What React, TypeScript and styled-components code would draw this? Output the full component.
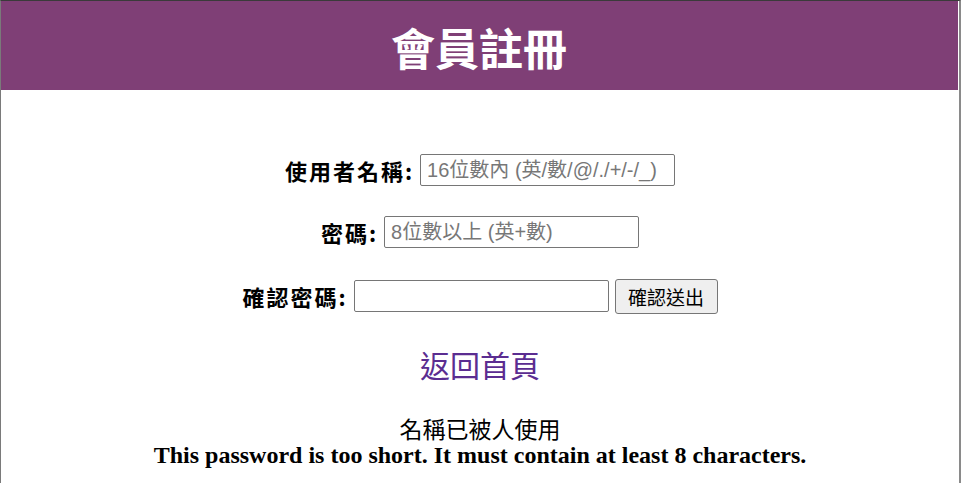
import React from "react";
import styled, { createGlobalStyle } from "styled-components";

const Global = createGlobalStyle`
  html, body { margin: 0; padding: 0; background: #fff; }
  body { font-family: "Liberation Sans", "Noto Sans CJK TC", sans-serif; }
`;

const Page = styled.div`
  box-sizing: border-box;
  width: 961px;
  height: 483px;
  border-top: 1px solid #3a3a3a;
  border-left: 1px solid #7a7a7a;
  border-right: 2px solid #8a8a8a;
  position: relative;
  overflow: hidden;
`;

const EdgeMark = styled.div`
  position: absolute;
  right: -2px;
  top: 333px;
  width: 2px;
  height: 62px;
  background: #2f5a58;
`;

const Header = styled.header`
  height: 89px;
  margin-left: -1px;
  margin-right: 1px;
  background: #7f3f76;
  display: flex;
  align-items: center;
  justify-content: center;
`;

const Title = styled.h1`
  margin: 0;
  color: #fff;
  font-family: "Noto Sans CJK TC", sans-serif;
  font-weight: 700;
  font-size: 44px;
  line-height: 1;
  padding-top: 2px;
`;

const Form = styled.form`
  display: flex;
  flex-direction: column;
  align-items: center;
  padding-top: 64px;
  gap: 30px;
`;

const Row = styled.div<{ $shift?: number }>`
  display: flex;
  align-items: center;
  gap: 6px;
  height: 32px;
  margin-top: ${(p) => p.$shift ?? 0}px;
`;

const Label = styled.label`
  font-family: "Noto Sans CJK TC", sans-serif;
  font-weight: 700;
  font-size: 22px;
  letter-spacing: 2px;
  color: #000;
`;

const Input = styled.input`
  box-sizing: border-box;
  width: 255px;
  height: 32px;
  border: 1px solid #767676;
  border-radius: 2px;
  padding: 0 6px;
  font-family: "Liberation Sans", "Noto Sans CJK TC", sans-serif;
  font-size: 20px;
  &::placeholder { color: #777; }
`;

const Button = styled.button`
  box-sizing: border-box;
  width: 103px;
  height: 35px;
  border: 1px solid #767676;
  border-radius: 3px;
  background: #efefef;
  font-family: "Noto Sans CJK TC", sans-serif;
  font-size: 19px;
  color: #000;
  padding: 0;
`;

const HomeLink = styled.a`
  margin-top: 7px;
  color: #5b2d91;
  text-decoration: none;
  font-family: "Noto Sans CJK TC", sans-serif;
  font-size: 30px;
  line-height: 1;
`;

const Messages = styled.div`
  display: flex;
  flex-direction: column;
  align-items: center;
  margin-top: 35px;
`;

const Msg = styled.div`
  font-family: "Noto Sans CJK TC", sans-serif;
  font-size: 23px;
  line-height: 28px;
  color: #000;
`;

const Err = styled.div`
  font-family: "Liberation Serif", serif;
  font-weight: 700;
  font-size: 24px;
  line-height: 26px;
  color: #000;
`;

export default function App() {
  return (
    <>
      <Global />
      <Page>
        <Header>
          <Title>會員註冊</Title>
        </Header>
        <Form onSubmit={(e) => e.preventDefault()}>
          <Row>
            <Label>使用者名稱:</Label>
            <Input placeholder="16位數內 (英/數/@/./+/-/_)" />
          </Row>
          <Row>
            <Label>密碼:</Label>
            <Input type="password" placeholder="8位數以上 (英+數)" />
          </Row>
          <Row $shift={2}>
            <Label>確認密碼:</Label>
            <Input type="password" />
            <Button type="submit">確認送出</Button>
          </Row>
          <HomeLink href="#">返回首頁</HomeLink>
        </Form>
        <Messages>
          <Msg>名稱已被人使用</Msg>
          <Err>This password is too short. It must contain at least 8 characters.</Err>
        </Messages>
        <EdgeMark />
      </Page>
    </>
  );
}
